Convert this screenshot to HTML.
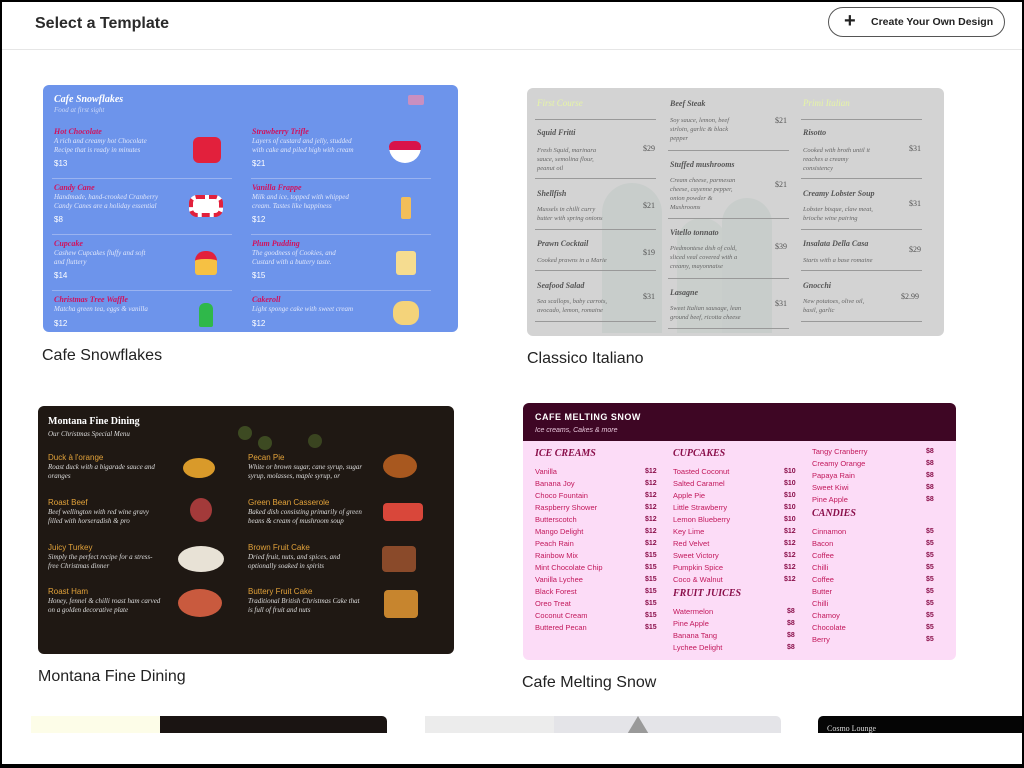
<!DOCTYPE html>
<html><head><meta charset="utf-8"><style>
*{margin:0;padding:0;box-sizing:border-box}
html,body{width:1024px;height:768px;overflow:hidden;background:#000;font-family:"Liberation Sans",sans-serif}
#pg{position:absolute;left:2px;top:2px;width:1020px;height:762px;background:#fff;overflow:hidden}
.a{position:absolute;white-space:nowrap}
.hdr{position:absolute;left:0;top:0;width:1020px;height:48px;border-bottom:1px solid #e6e6e6}
.lbl{font-size:16px;color:#222}
.card{position:absolute;border-radius:6px;overflow:hidden}
.c1 .n{color:#d0125e;font:italic bold 8px "Liberation Serif",serif}
.c1 .d{color:#dfe6fb;font:italic 7px "Liberation Serif",serif;line-height:9px}
.c1 .p{color:#fff;font-size:8px}
.c1 .hr{position:absolute;height:1px;background:#9ab3f0}
.c2 .n{color:#555;font:italic bold 8px "Liberation Serif",serif}
.c2 .d{color:#666;font:italic 6.5px "Liberation Serif",serif;line-height:9px}
.c2 .p{color:#555;font:8px "Liberation Serif",serif}
.c2 .hr{position:absolute;height:1px;background:#999}
.c3 .n{color:#e2a23a;font-size:8px}
.c3 .d{color:#ddd;font:italic 7px "Liberation Serif",serif;line-height:9px}
.c4 .t{color:#c2185b;font-size:7.5px}
.c4 .pr{color:#8a0f4a;font-size:7px;font-weight:bold}
.c4 .h{color:#8a0f4a;font:italic bold 10px "Liberation Serif",serif}
.dot{position:absolute;border-radius:50%}
</style></head><body><div id="pg">
<div class="hdr"></div>
<div class="a" style="left:33px;top:13px;font-size:16px;font-weight:bold;color:#2a2a2a">Select a Template</div>
<div class="a" style="left:826px;top:5px;width:177px;height:30px;border:1.5px solid #555;border-radius:15px;background:#fff"></div>
<div class="a" style="left:842px;top:8px;font-size:20px;font-weight:bold;color:#222">+</div>
<div class="a" style="left:869px;top:14px;font-size:10.5px;font-weight:bold;color:#222">Create Your Own Design</div>

<!-- card1 -->
<div class="card c1" style="left:41px;top:83px;width:415px;height:247px;background:#6d94eb">
<div class="a" style="left:11px;top:9px;color:#fff;font:italic bold 10px 'Liberation Serif',serif">Cafe Snowflakes</div>
<div class="a" style="left:11px;top:21px;color:#c8d6f8;font:italic 7px 'Liberation Serif',serif">Food at first sight</div>
<div class="dot" style="left:365px;top:10px;width:16px;height:10px;background:#c98fc0;border-radius:2px"></div>
<div class="a n" style="left:11px;top:42px">Hot Chocolate</div><div class="a d" style="left:11px;top:52px">A rich and creamy hot Chocolate<br>Recipe that is ready in minutes</div><div class="a p" style="left:11px;top:74px">$13</div>
<div class="dot" style="left:150px;top:52px;width:28px;height:26px;background:#e2203c;border-radius:6px"></div>
<div class="hr" style="left:9px;top:93px;width:180px"></div>
<div class="a n" style="left:11px;top:98px">Candy Cane</div><div class="a d" style="left:11px;top:108px">Handmade, hand-crooked Cranberry<br>Candy Canes are a holiday essential</div><div class="a p" style="left:11px;top:130px">$8</div>
<div class="dot" style="left:146px;top:110px;width:34px;height:22px;border:4px dashed #e2203c;border-radius:8px;background:#fff"></div>
<div class="hr" style="left:9px;top:149px;width:180px"></div>
<div class="a n" style="left:11px;top:154px">Cupcake</div><div class="a d" style="left:11px;top:164px">Cashew Cupcakes fluffy and soft<br>and fluttery</div><div class="a p" style="left:11px;top:186px">$14</div>
<div class="dot" style="left:152px;top:166px;width:22px;height:24px;background:#f6c143;border-radius:10px 10px 3px 3px;border-top:8px solid #e2203c"></div>
<div class="hr" style="left:9px;top:205px;width:180px"></div>
<div class="a n" style="left:11px;top:210px">Christmas Tree Waffle</div><div class="a d" style="left:11px;top:220px">Matcha green tea, eggs &amp; vanilla</div><div class="a p" style="left:11px;top:234px">$12</div>
<div class="dot" style="left:156px;top:218px;width:14px;height:24px;background:#2fb84a;border-radius:6px 6px 2px 2px"></div>
<div class="a n" style="left:209px;top:42px">Strawberry Trifle</div><div class="a d" style="left:209px;top:52px">Layers of custard and jelly, studded<br>with cake and piled high with cream</div><div class="a p" style="left:209px;top:74px">$21</div>
<div class="dot" style="left:346px;top:56px;width:32px;height:22px;background:#fff;border-top:9px solid #d8134a;border-radius:6px 6px 16px 16px"></div>
<div class="hr" style="left:208px;top:93px;width:180px"></div>
<div class="a n" style="left:209px;top:98px">Vanilla Frappe</div><div class="a d" style="left:209px;top:108px">Milk and ice, topped with whipped<br>cream. Tastes like happiness</div><div class="a p" style="left:209px;top:130px">$12</div>
<div class="dot" style="left:358px;top:112px;width:10px;height:22px;background:#f3be5a;border-radius:2px"></div>
<div class="hr" style="left:208px;top:149px;width:180px"></div>
<div class="a n" style="left:209px;top:154px">Plum Pudding</div><div class="a d" style="left:209px;top:164px">The goodness of Cookies, and<br>Custard with a buttery taste.</div><div class="a p" style="left:209px;top:186px">$15</div>
<div class="dot" style="left:353px;top:166px;width:20px;height:24px;background:#f5dc90;border-radius:3px"></div>
<div class="hr" style="left:208px;top:205px;width:180px"></div>
<div class="a n" style="left:209px;top:210px">Cakeroll</div><div class="a d" style="left:209px;top:220px">Light sponge cake with sweet cream</div><div class="a p" style="left:209px;top:234px">$12</div>
<div class="dot" style="left:350px;top:216px;width:26px;height:24px;background:#f4d37a;border-radius:10px"></div>
</div>
<div class="a lbl" style="left:40px;top:345px">Cafe Snowflakes</div>

<!-- card2 -->
<div class="card c2" style="left:525px;top:86px;width:417px;height:248px;background:#d3d3d3">
<div class="dot" style="left:75px;top:95px;width:60px;height:150px;background:#c8cdcb;border-radius:30px 30px 0 0"></div>
<div class="dot" style="left:150px;top:130px;width:50px;height:115px;background:#cacfcc;border-radius:25px 25px 0 0"></div>
<div class="dot" style="left:195px;top:110px;width:50px;height:135px;background:#c8cdcb;border-radius:25px 25px 0 0"></div>
<div class="a" style="left:10px;top:10px;color:#e6f5a5;font:italic 9px 'Liberation Serif',serif">First Course</div>
<div class="hr" style="left:8px;top:31px;width:121px"></div>
<div class="a n" style="left:10px;top:40px">Squid Fritti</div><div class="a d" style="left:10px;top:58px">Fresh Squid, marinara<br>sauce, semolina flour,<br>peanut oil</div><div class="a p" style="left:116px;top:56px">$29</div>
<div class="hr" style="left:8px;top:90px;width:121px"></div>
<div class="a n" style="left:10px;top:101px">Shellfish</div><div class="a d" style="left:10px;top:117px">Mussels in chilli curry<br>butter with spring onions</div><div class="a p" style="left:116px;top:113px">$21</div>
<div class="hr" style="left:8px;top:141px;width:121px"></div>
<div class="a n" style="left:10px;top:151px">Prawn Cocktail</div><div class="a d" style="left:10px;top:168px">Cooked prawns in a Marie</div><div class="a p" style="left:116px;top:160px">$19</div>
<div class="hr" style="left:8px;top:182px;width:121px"></div>
<div class="a n" style="left:10px;top:193px">Seafood Salad</div><div class="a d" style="left:10px;top:209px">Sea scallops, baby carrots,<br>avocado, lemon, romaine</div><div class="a p" style="left:116px;top:204px">$31</div>
<div class="hr" style="left:8px;top:233px;width:121px"></div>
<div class="a n" style="left:143px;top:11px">Beef Steak</div><div class="a d" style="left:143px;top:28px">Soy sauce, lemon, beef<br>sirloin, garlic &amp; black<br>pepper</div><div class="a p" style="left:248px;top:28px">$21</div>
<div class="hr" style="left:141px;top:62px;width:121px"></div>
<div class="a n" style="left:143px;top:72px">Stuffed mushrooms</div><div class="a d" style="left:143px;top:88px">Cream cheese, parmesan<br>cheese, cayenne pepper,<br>onion powder &amp;<br>Mushrooms</div><div class="a p" style="left:248px;top:92px">$21</div>
<div class="hr" style="left:141px;top:130px;width:121px"></div>
<div class="a n" style="left:143px;top:140px">Vitello tonnato</div><div class="a d" style="left:143px;top:156px">Piedmontese dish of cold,<br>sliced veal covered with a<br>creamy, mayonnaise</div><div class="a p" style="left:248px;top:154px">$39</div>
<div class="hr" style="left:141px;top:190px;width:121px"></div>
<div class="a n" style="left:143px;top:200px">Lasagne</div><div class="a d" style="left:143px;top:216px">Sweet Italian sausage, lean<br>ground beef, ricotta cheese</div><div class="a p" style="left:248px;top:211px">$31</div>
<div class="hr" style="left:141px;top:240px;width:121px"></div>
<div class="a" style="left:276px;top:10px;color:#e6f5a5;font:italic 9px 'Liberation Serif',serif">Primi Italian</div>
<div class="hr" style="left:274px;top:31px;width:121px"></div>
<div class="a n" style="left:276px;top:40px">Risotto</div><div class="a d" style="left:276px;top:58px">Cooked with broth until it<br>reaches a creamy<br>consistency</div><div class="a p" style="left:382px;top:56px">$31</div>
<div class="hr" style="left:274px;top:90px;width:121px"></div>
<div class="a n" style="left:276px;top:101px">Creamy Lobster Soup</div><div class="a d" style="left:276px;top:117px">Lobster bisque, claw meat,<br>brioche wine pairing</div><div class="a p" style="left:382px;top:111px">$31</div>
<div class="hr" style="left:274px;top:141px;width:121px"></div>
<div class="a n" style="left:276px;top:151px">Insalata Della Casa</div><div class="a d" style="left:276px;top:168px">Starts with a base romaine</div><div class="a p" style="left:382px;top:157px">$29</div>
<div class="hr" style="left:274px;top:182px;width:121px"></div>
<div class="a n" style="left:276px;top:193px">Gnocchi</div><div class="a d" style="left:276px;top:209px">New potatoes, olive oil,<br>basil, garlic</div><div class="a p" style="left:374px;top:204px">$2.99</div>
<div class="hr" style="left:274px;top:233px;width:121px"></div>
</div>
<div class="a lbl" style="left:525px;top:348px">Classico Italiano</div>

<!-- card3 -->
<div class="card c3" style="left:36px;top:404px;width:416px;height:248px;background:#1f1813">
<div class="dot" style="left:200px;top:20px;width:14px;height:14px;background:#3d4a22"></div>
<div class="dot" style="left:220px;top:30px;width:14px;height:14px;background:#3d4a22"></div>
<div class="dot" style="left:270px;top:28px;width:14px;height:14px;background:#3a4420"></div>
<div class="a" style="left:10px;top:10px;color:#fff;font:bold 10px 'Liberation Serif',serif">Montana Fine Dining</div>
<div class="a" style="left:10px;top:24px;color:#ddd;font:italic 7px 'Liberation Serif',serif">Our Christmas Special Menu</div>
<div class="a n" style="left:10px;top:47px">Duck à l'orange</div><div class="a d" style="left:10px;top:57px">Roast duck with a bigarade sauce and<br>oranges</div>
<div class="a n" style="left:10px;top:92px">Roast Beef</div><div class="a d" style="left:10px;top:102px">Beef wellington with red wine gravy<br>filled with horseradish &amp; pro</div>
<div class="a n" style="left:10px;top:137px">Juicy Turkey</div><div class="a d" style="left:10px;top:147px">Simply the perfect recipe for a stress-<br>free Christmas dinner</div>
<div class="a n" style="left:10px;top:181px">Roast Ham</div><div class="a d" style="left:10px;top:191px">Honey, fennel &amp; chilli roast ham carved<br>on a golden decorative plate</div>
<div class="a n" style="left:210px;top:47px">Pecan Pie</div><div class="a d" style="left:210px;top:57px">White or brown sugar, cane syrup, sugar<br>syrup, molasses, maple syrup, or</div>
<div class="a n" style="left:210px;top:92px">Green Bean Casserole</div><div class="a d" style="left:210px;top:102px">Baked dish consisting primarily of green<br>beans &amp; cream of mushroom soup</div>
<div class="a n" style="left:210px;top:137px">Brown Fruit Cake</div><div class="a d" style="left:210px;top:147px">Dried fruit, nuts, and spices, and<br>optionally soaked in spirits</div>
<div class="a n" style="left:210px;top:181px">Buttery Fruit Cake</div><div class="a d" style="left:210px;top:191px">Traditional British Christmas Cake that<br>is full of fruit and nuts</div>
<div class="dot" style="left:145px;top:52px;width:32px;height:20px;background:#d99a2a"></div>
<div class="dot" style="left:152px;top:92px;width:22px;height:24px;background:#a33a3a"></div>
<div class="dot" style="left:140px;top:140px;width:46px;height:26px;background:#e8e2d6"></div>
<div class="dot" style="left:140px;top:183px;width:44px;height:28px;background:#c95a3e"></div>
<div class="dot" style="left:345px;top:48px;width:34px;height:24px;background:#a8581f"></div>
<div class="dot" style="left:345px;top:97px;width:40px;height:18px;background:#d9473a;border-radius:4px"></div>
<div class="dot" style="left:344px;top:140px;width:34px;height:26px;background:#8a4a2a;border-radius:4px"></div>
<div class="dot" style="left:346px;top:184px;width:34px;height:28px;background:#c7852e;border-radius:4px"></div>
</div>
<div class="a lbl" style="left:36px;top:666px">Montana Fine Dining</div>

<!-- card4 -->
<div class="card c4" style="left:521px;top:401px;width:433px;height:257px;background:#fcdcf7">
<div class="a" style="left:0;top:0;width:433px;height:38px;background:#3e0624"></div>
<div class="a" style="left:12px;top:9px;color:#fff;font-size:9px;font-weight:bold;letter-spacing:.5px">CAFE MELTING SNOW</div>
<div class="a" style="left:12px;top:24px;color:#e9c7dc;font:italic 7px 'Liberation Sans',sans-serif">Ice creams, Cakes &amp; more</div>
<div class="a h" style="left:12px;top:45px">ICE CREAMS</div>
<div class="a t" style="left:12px;top:63px;line-height:12px">Vanilla<br>Banana Joy<br>Choco Fountain<br>Raspberry Shower<br>Butterscotch<br>Mango Delight<br>Peach Rain<br>Rainbow Mix<br>Mint Chocolate Chip<br>Vanilla Lychee<br>Black Forest<br>Oreo Treat<br>Coconut Cream<br>Buttered Pecan</div>
<div class="a pr" style="left:122px;top:63px;line-height:12px">$12<br>$12<br>$12<br>$12<br>$12<br>$12<br>$12<br>$15<br>$15<br>$15<br>$15<br>$15<br>$15<br>$15</div>
<div class="a h" style="left:150px;top:45px">CUPCAKES</div>
<div class="a t" style="left:150px;top:63px;line-height:12px">Toasted Coconut<br>Salted Caramel<br>Apple Pie<br>Little Strawberry<br>Lemon Blueberry<br>Key Lime<br>Red Velvet<br>Sweet Victory<br>Pumpkin Spice<br>Coco &amp; Walnut</div>
<div class="a pr" style="left:261px;top:63px;line-height:12px">$10<br>$10<br>$10<br>$10<br>$10<br>$12<br>$12<br>$12<br>$12<br>$12</div>
<div class="a h" style="left:150px;top:185px">FRUIT JUICES</div>
<div class="a t" style="left:150px;top:203px;line-height:12px">Watermelon<br>Pine Apple<br>Banana Tang<br>Lychee Delight</div>
<div class="a pr" style="left:264px;top:203px;line-height:12px">$8<br>$8<br>$8<br>$8</div>
<div class="a t" style="left:289px;top:43px;line-height:12px">Tangy Cranberry<br>Creamy Orange<br>Papaya Rain<br>Sweet Kiwi<br>Pine Apple</div>
<div class="a pr" style="left:403px;top:43px;line-height:12px">$8<br>$8<br>$8<br>$8<br>$8</div>
<div class="a h" style="left:289px;top:105px">CANDIES</div>
<div class="a t" style="left:289px;top:123px;line-height:12px">Cinnamon<br>Bacon<br>Coffee<br>Chilli<br>Coffee<br>Butter<br>Chilli<br>Chamoy<br>Chocolate<br>Berry</div>
<div class="a pr" style="left:403px;top:123px;line-height:12px">$5<br>$5<br>$5<br>$5<br>$5<br>$5<br>$5<br>$5<br>$5<br>$5</div>
</div>
<div class="a lbl" style="left:520px;top:672px">Cafe Melting Snow</div>

<!-- bottom row -->
<div class="card" style="left:29px;top:714px;width:356px;height:40px;border-radius:5px 5px 0 0;background:#1a1412"></div>
<div class="a" style="left:29px;top:714px;width:129px;height:40px;background:#fdfde8"></div>
<div class="card" style="left:423px;top:714px;width:356px;height:40px;border-radius:5px 5px 0 0;background:#e4e4e8"></div>
<div class="a" style="left:423px;top:714px;width:129px;height:40px;background:#ececec"></div>
<div class="a" style="left:612px;top:714px;width:0;height:0;border-left:24px solid transparent;border-right:24px solid transparent;border-bottom:40px solid #9a9a9a"></div>
<div class="card" style="left:816px;top:714px;width:210px;height:40px;border-radius:5px 0 0 0;background:#050505"></div>
<div class="a" style="left:825px;top:722px;color:#ddd;font:8px 'Liberation Serif',serif">Cosmo Lounge</div>
<div class="a" style="left:0;top:731px;width:1020px;height:31px;background:#fff"></div>
</div></body></html>
